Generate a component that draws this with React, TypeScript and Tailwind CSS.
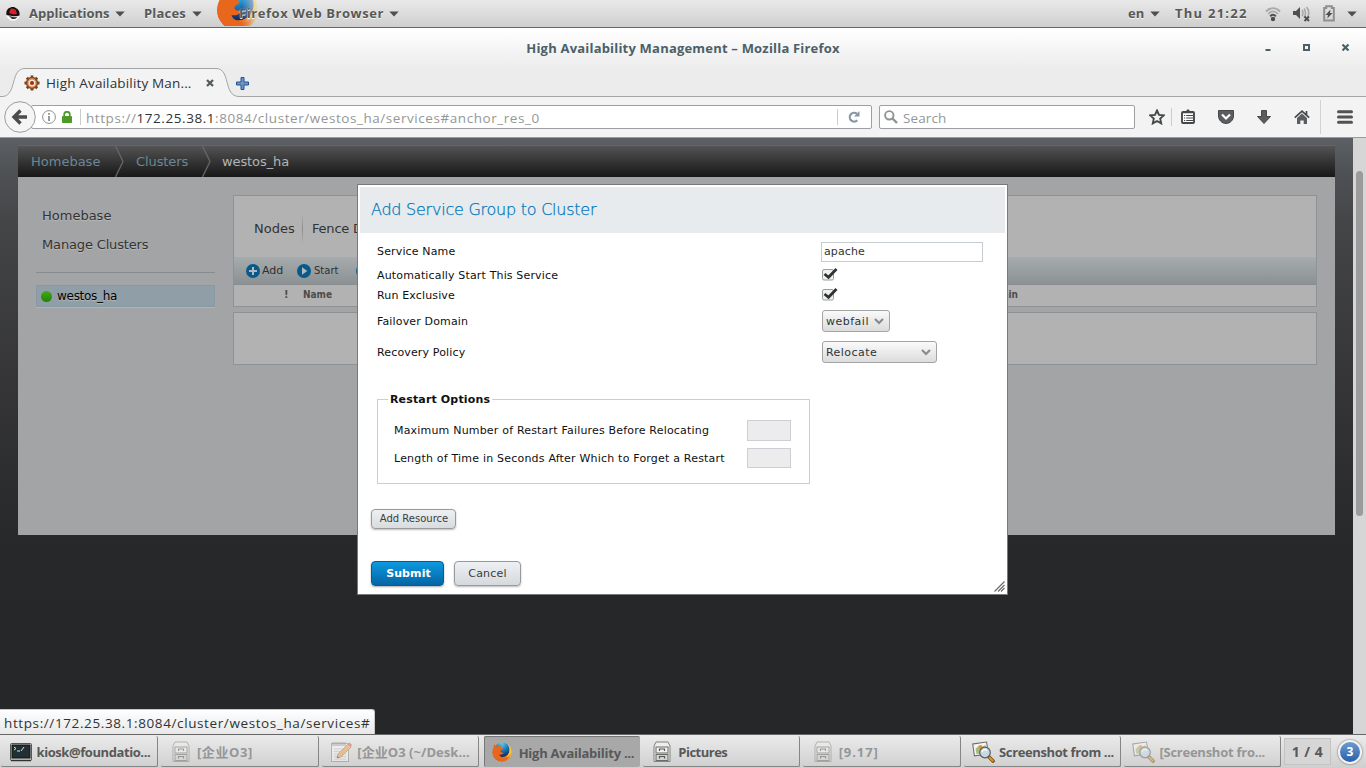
import type { ReactNode } from "react";

const CHROME = "font-['Open_Sans','Noto_Sans_CJK_SC',sans-serif]";
const PAGE = "font-['DejaVu_Sans',sans-serif]";

function Caret() {
  return (
    <svg width="10" height="6" viewBox="0 0 10 6" className="shrink-0">
      <path d="M0.3 0.5h9.4L5 5.4z" fill="#4d4f4f" />
    </svg>
  );
}

function FirefoxLogo({ size }: { size: number }) {
  return (
    <svg width={size} height={size} viewBox="0 0 40 40" className="block shrink-0">
      <defs>
        <radialGradient id="globe" cx="0.45" cy="0.1" r="0.9">
          <stop offset="0" stopColor="#5fd0f5" />
          <stop offset="0.45" stopColor="#1b86c9" />
          <stop offset="1" stopColor="#12245c" />
        </radialGradient>
        <linearGradient id="tail" x1="0" y1="0.8" x2="1" y2="0.2">
          <stop offset="0" stopColor="#d9481c" />
          <stop offset="0.55" stopColor="#ee7a1b" />
          <stop offset="1" stopColor="#fde24a" />
        </linearGradient>
      </defs>
      <circle cx="20" cy="20.500" r="19" fill="url(#tail)" />
      <circle cx="20.500" cy="15.500" r="14.500" fill="url(#globe)" />
      <path
        d="M5 4c-2 3-2 6-1.500 8C1 17 1 23 2.500 28c4 7 10 10 17 10 7-1 12-4 14-9-4 3-8 3.500-12 2-4-1-7-4-7-6 3 1 6 0 8-2 1-1 0-2-2-2-3 0-4-2-3-4l4-3c1-2-1-3-5-3 0-2 1-3 4-5-4-1-7 0-9 3L9 9C7 8 5.500 7 5 4z"
        fill="#e9671c"
      />
      <path d="M34 8c2 4 2 9 0 14-1 3-3 6-6 8 6-1 10-6 10.500-13C38.500 13 37 10 34 8z" fill="#f9c52d" />
    </svg>
  );
}

function TopPanel() {
  return (
    <header
      className={`${CHROME} relative flex h-7 items-center border-b border-[#666] bg-linear-to-b from-[#e9e9e9] to-[#cfcfcf] pt-px text-[13px] font-bold text-[#575959] [text-shadow:0_1px_0_#f4f4f4]`}
    >
      <svg width="14" height="14" viewBox="0 0 14 14" className="ml-1.5 shrink-0">
        <circle cx="7" cy="7" r="6.700" fill="#f8f8f8" />
        <path d="M0.500 8C-1 2 5-1 9 .5c4 1.500 5 5 4.500 8C10 10 5 9 .5 8z" fill="#151010" />
        <path d="M3 5.500L4.500 2C6 1 7 2 8 2c2 0 2.500 3 3 5-3 1-7 0-8-1.500z" fill="#d8202a" />
        <path d="M2 8c3 2 7 3 10 1.500L9 12H6z" fill="#333" />
      </svg>
      <span className="ml-[9px] w-[81px]">Applications</span>
      <span className="ml-[5px]"><Caret /></span>
      <span className="ml-[19px] w-[43px] tracking-[0.2px]">Places</span>
      <span className="ml-[5px]"><Caret /></span>
      <div className="absolute left-[216px] top-0 h-[26px] w-[43px] overflow-hidden">
        <div className="-mt-3 [mask-image:linear-gradient(to_right,black_60%,rgb(0_0_0/0.15)_98%)]">
          <FirefoxLogo size={43} />
        </div>
      </div>
      <span className="relative ml-[37px] w-[146px] whitespace-nowrap tracking-[0.56px] [text-shadow:0_0_1px_#eee,0_1px_0_#f4f4f4]">
        Firefox Web Browser
      </span>
      <span className="ml-1"><Caret /></span>
      <div className="ml-auto flex items-center">
        <span className="w-[17px]">en</span>
        <span className="ml-[5px]"><Caret /></span>
        <span className="ml-[15px] w-[76px] whitespace-nowrap tracking-[1.250px]">Thu 21:22</span>
        <svg width="16" height="16" viewBox="0 0 16 16" fill="none" className="ml-[14px]">
          <path d="M1 5.500C5 1 11 1 15 5.500M3.200 8c3-3.500 6.600-3.500 9.600 0" stroke="#a9abab" strokeWidth="1.900" />
          <path d="M5.200 10.300c1.800-2 3.800-2 5.600 0" stroke="#4d4f4f" strokeWidth="2" />
          <circle cx="8" cy="13" r="2.200" fill="#4d4f4f" />
        </svg>
        <svg width="18" height="16" viewBox="0 0 18 16" fill="none" className="ml-3">
          <path d="M0 5h3l4-4v12L3 9H0z" fill="#4d4f4f" />
          <path d="M9 4q2 3 0 6M11 2.500q3 4.500 0 9M13.500 1q4 5 1 10" stroke="#a5a7a7" strokeWidth="1.500" />
          <path d="M11.500 10.500l4.500 4.500m0-4.500L11.500 15" stroke="#4d4f4f" strokeWidth="1.900" />
        </svg>
        <svg width="12" height="17" viewBox="0 0 12 17" fill="none" className="mb-px ml-3">
          <path d="M1.200 3h2V1.200h5.600V3h2v12.500H1.200z" stroke="#8d8f8f" strokeWidth="2" />
          <path d="M7.500 4.500L2.500 10H5l-.7 3.500L9.500 8H7z" fill="#4d4f4f" />
        </svg>
        <span className="mr-[9px] ml-3"><Caret /></span>
      </div>
    </header>
  );
}

function TitleBar() {
  return (
    <div className={`${CHROME} flex h-[69px] flex-col bg-linear-to-b from-white to-[#ececec] to-60%`}>
      <div className="relative flex h-10 items-center justify-center pt-0.5 text-[13px] font-bold tracking-[0.2px] text-[#4b6068]">
        <span>High Availability Management – Mozilla Firefox</span>
        <svg width="90" height="14" viewBox="0 0 90 14" fill="none" className="absolute top-3 right-[14px]">
          <path d="M3.500 10H8.500" stroke="#4b6068" strokeWidth="2" />
          <rect x="42" y="5" width="5" height="5" stroke="#4b6068" strokeWidth="2" />
          <path d="M80.500 4.500l6 6m0-6l-6 6" stroke="#4b6068" strokeWidth="2.200" />
        </svg>
      </div>
      <div className="relative flex h-[29px] items-center text-[13.5px] text-[#2e3436]">
        <svg width="1366" height="29" viewBox="0 0 1366 29" fill="none" className="absolute inset-0">
          <path d="M0 29V28.500H3C17 27 10 .5 25 .5H216C231 .5 223 28.500 239 28.500H1366V29z" fill="#f3f3f3" />
          <path d="M0 28.500H3C17 27 10 .5 25 .5H216C231 .5 223 28.500 239 28.500H1366" stroke="#a2a6a9" />
        </svg>
        <svg width="16" height="16" viewBox="0 0 16 16" fill="none" className="relative ml-6">
          <path d="M8 0.500V15.500M.5 8H15.500M2.800 2.800l10.400 10.400M13.200 2.800L2.800 13.200" stroke="#744023" strokeWidth="2.800" />
          <circle cx="8" cy="8" r="5.400" fill="#d99b62" stroke="#8a4822" strokeWidth="1.500" />
          <circle cx="8" cy="8" r="2.700" fill="#a42b17" stroke="#f5e6d5" strokeWidth="1.300" />
        </svg>
        <span className="relative ml-[6px] w-[150px] pt-0.5 whitespace-nowrap tracking-[0.16px]">High Availability Man...</span>
        <svg width="8" height="8" viewBox="0 0 8 8" className="relative ml-[10px]">
          <path d="M1 1l6 6m0-6L1 7" stroke="#555b5d" strokeWidth="2.300" />
        </svg>
        <svg width="13" height="13" viewBox="0 0 13 13" className="relative mt-px ml-[22px]">
          <path d="M5 .5h3V5h4.500v3H8v4.500H5V8H.5V5H5z" fill="#6a95c8" stroke="#23538f" strokeLinejoin="round" />
        </svg>
      </div>
    </div>
  );
}

function Toolbar() {
  return (
    <div className={`${CHROME} relative flex h-[41px] items-center border-b border-[#9b9b9b] bg-[#f3f3f3] text-[13.5px]`}>
      <svg width="34" height="34" viewBox="0 0 34 34" fill="none" className="z-10 ml-[3px] shrink-0">
        <circle cx="17" cy="17" r="15.300" fill="#f5f5f5" stroke="#9a9d9e" />
        <path d="M24 17H12M17.500 10.500L11 17l6.500 6.500" stroke="#4a4c4d" strokeWidth="3.400" />
      </svg>
      <div className="-ml-1.5 flex h-6 w-[841px] items-center rounded-[2px] border border-[#9d9fa0] bg-white">
        <svg width="14" height="14" viewBox="0 0 14 14" fill="none" className="ml-2.5 shrink-0">
          <circle cx="7" cy="7" r="6.400" stroke="#8d9091" />
          <path d="M7 3v1.800M7 6v5" stroke="#8d9091" strokeWidth="1.800" />
        </svg>
        <svg width="10" height="12" viewBox="0 0 10 12" fill="none" className="ml-1.5 shrink-0">
          <path d="M2.200 6V3.500a2.800 2.700 0 0 1 5.600 0V6" stroke="#4d9a28" strokeWidth="1.700" />
          <rect y="5" width="10" height="7" rx="0.800" fill="#4d9a28" />
        </svg>
        <span className="ml-2 h-4 border-l border-[#ccc]" />
        <span className="ml-[5px] pt-0.5 whitespace-nowrap tracking-[0.56px] text-[#949797]">
          https://<span className="text-[#2e3436]">172.25.38.1</span>:8084/cluster/westos_ha/services#anchor_res_0
        </span>
        <span className="ml-auto h-4 border-l border-[#ccc]" />
        <svg width="12" height="12" viewBox="0 0 12 12" fill="none" className="mr-[11px] ml-2.5">
          <path d="M9.300 9.300A4.400 4.400 0 1 1 9 2.800" stroke="#8997a3" strokeWidth="2.200" />
          <path d="M11.500 0v5.500H6z" fill="#8997a3" />
        </svg>
      </div>
      <div className="ml-[7px] flex h-6 w-64 items-center rounded-[2px] border border-[#9d9fa0] bg-white">
        <svg width="14" height="14" viewBox="0 0 14 14" fill="none" className="ml-1">
          <circle cx="5.300" cy="5.300" r="4.200" stroke="#8f9292" strokeWidth="1.900" />
          <path d="M8.500 8.500l4.500 4.500" stroke="#8f9292" strokeWidth="2.400" />
        </svg>
        <span className="ml-[5px] pt-0.5 tracking-[0.1px] text-[#949797]">Search</span>
      </div>
      <svg width="16" height="16" viewBox="0 0 16 16" fill="none" className="ml-3.5">
        <path d="M8 1.500l2 4.400 4.800.5-3.600 3.200 1 4.800L8 12l-4.200 2.400 1-4.800L1.200 6.400 6 5.900z" stroke="#454749" strokeWidth="1.900" />
      </svg>
      <span className="ml-1.5 h-[18px] border-l border-[#ccc]" />
      <svg width="14" height="15" viewBox="0 0 14 15" fill="none" className="mb-0.5 ml-[9px]">
        <rect x="1" y="3" width="12" height="11" rx="1" fill="#fff" stroke="#454749" strokeWidth="1.900" />
        <path d="M4 3L7 0l3 3z" fill="#454749" />
        <path d="M2 3.500h10" stroke="#454749" strokeWidth="1.500" />
        <path d="M3 6.500h1.200m1 0H12M3 9h1.200m1 0H12M3 11.500h1.200m1 0H12" stroke="#454749" />
      </svg>
      <svg width="16" height="14" viewBox="0 0 16 14" fill="none" className="ml-[23px]">
        <path d="M.5.500h15V6c0 4-3.500 7.500-7.500 7.500S.5 10 .5 6z" fill="#5b5d5f" stroke="#454749" />
        <path d="M4 4.500l4 4 4-4" stroke="white" strokeWidth="2.200" />
      </svg>
      <svg width="14" height="14" viewBox="0 0 14 14" className="ml-[23px]">
        <path d="M4.500.5h5v6h4L7 13.500.5 6.500h4z" fill="#5b5d5f" stroke="#454749" />
      </svg>
      <svg width="16" height="14" viewBox="0 0 16 14" fill="none" className="ml-[23px]">
        <path d="M3 8l5-4.500L13 8v6H9.700v-3.500H6.300V14H3z" fill="#5b5d5f" />
        <path d="M.8 7.700L8 1.200l7.200 6.500M12.500 1v4" stroke="#454749" strokeWidth="1.700" />
      </svg>
      <span className="ml-2.5 h-[34px] border-l border-[#d2d2d2]" />
      <svg width="16" height="14" viewBox="0 0 16 14" className="ml-4">
        <path d="M1.500 1.700h13M1.500 7h13M1.500 12.300h13" stroke="#505254" strokeWidth="3" strokeLinecap="round" />
      </svg>
    </div>
  );
}

function CrumbArrow() {
  return (
    <svg width="10" height="31" viewBox="0 0 10 31" fill="none" className="shrink-0">
      <path d="M.5 0L8 15.500.5 31" stroke="#666" strokeWidth="1.300" />
    </svg>
  );
}

function ActionIcon({ play }: { play?: boolean }) {
  return (
    <svg width="14" height="14" viewBox="0 0 14 14" className="shrink-0">
      <circle cx="7" cy="7" r="7" fill="#085a8d" />
      {play ? <path d="M5 3.300L10.300 7 5 10.700z" fill="#b5b9bb" /> : <path d="M7 3v8M3 7h8" stroke="#b5b9bb" strokeWidth="2" />}
    </svg>
  );
}

function ClusterPage() {
  return (
    <div className="mx-[18px] mt-[7px] flex h-[390px] flex-col">
      <nav className="flex h-8 items-center border-t border-[#636567] bg-linear-to-b from-[#545454] to-[#181818] text-[13px] text-[#6b8797]">
        <span className="ml-[13px] w-[84px]">Homebase</span>
        <CrumbArrow />
        <span className="ml-[11px] w-[66px] tracking-[-0.1px]">Clusters</span>
        <CrumbArrow />
        <span className="ml-[10px] tracking-[-0.1px] text-[#b4b4b4]">westos_ha</span>
      </nav>
      <div className="flex flex-1 bg-[#a3a4a6]">
        <aside className="ml-[18px] w-[179px] pt-[29px] text-[13px] text-[#333] [text-shadow:0_1px_1px_#bbb]">
          <div className="ml-1.5 leading-[19px]">Homebase</div>
          <div className="mt-2.5 ml-1.5 leading-[19px] tracking-[-0.15px]">Manage Clusters</div>
          <div className="mt-[18px] border-t border-[#878b8e]" />
          <div className="mt-3 flex h-[22px] items-center rounded-[1px] border border-[#8799a3] bg-[#909ea7] text-xs tracking-[-0.28px] text-black shadow-[0_1px_1px_#b5b5b5]">
            <span className="mr-[5px] ml-1 size-[11px] rounded-full bg-linear-to-b from-[#45a818] to-[#1b8600]" />
            westos_ha
          </div>
        </aside>
        <main className="mt-[18px] mr-[18px] ml-[18px] flex-1">
          <section className="flex h-28 flex-col border border-[#8e9294] bg-[#b2b2b2]">
            <div className="flex h-[61px] items-center pt-1 pl-5 text-[13px] text-[#333]">
              <span className="w-12">Nodes</span>
              <span className="h-[30px] w-px bg-linear-to-b from-transparent via-[#8c8c8c] to-transparent" />
              <span className="ml-[9px] whitespace-nowrap tracking-[-0.2px]">Fence Devices</span>
            </div>
            <div className="flex h-7 items-center border-b border-[#8b8e90] bg-linear-to-b from-[#a6abae] to-[#8c9193] pl-3 text-[11px] text-[#2f2f2f]">
              <ActionIcon />
              <span className="ml-[2px] w-[35px] pt-px">Add</span>
              <ActionIcon play />
              <span className="ml-[3px] w-[42px] text-[10px]">Start</span>
              <ActionIcon />
            </div>
            <div className="flex flex-1 items-center pb-0.5 text-[10px] font-bold text-[#4c4c4c]">
              <span className="ml-[50px] w-[19px]">!</span>
              <span className="w-[656px] font-['DejaVu_Sans_Condensed','DejaVu_Sans',sans-serif]">Name</span>
              <span className="w-[60px] pr-px text-right font-['DejaVu_Sans_Condensed','DejaVu_Sans',sans-serif]">Domain</span>
            </div>
          </section>
          <section className="mt-[5px] h-[53px] border border-[#8e9294] bg-[#b2b2b2]" />
        </main>
      </div>
    </div>
  );
}

function FormRow({ label, className, children }: { label: string; className: string; children: ReactNode }) {
  return (
    <div className={`flex items-center ${className}`}>
      <span className="w-[444px] tracking-[0.15px]">{label}</span>
      {children}
    </div>
  );
}

function Checkbox() {
  return (
    <svg width="16" height="14" viewBox="0 0 16 14" fill="none" className="mb-0.5 ml-px">
      <rect x=".5" y="2.500" width="11" height="10.500" rx="1.500" fill="#f0f0f0" stroke="#9b9d9d" />
      <path d="M2.500 7l4 3.300L14.500 2" stroke="#2e3436" strokeWidth="2.800" />
    </svg>
  );
}

function Select({ value, className }: { value: string; className: string }) {
  return (
    <button
      className={`ml-px flex h-[22px] items-center justify-between rounded-[3px] border border-[#a3a5a5] bg-linear-to-b from-[#fafafa] to-[#dcdcdc] pl-[3px] text-[#2e3436] ${className}`}
    >
      <span className="pt-[3px]">{value}</span>
      <svg width="10" height="7" viewBox="0 0 10 7" fill="none" className="mr-[5px]">
        <path d="M1 1l4 4 4-4" stroke="#8a8c8c" strokeWidth="2.200" />
      </svg>
    </button>
  );
}

function ServiceDialog() {
  return (
    <div className="absolute top-[46px] left-[357px] flex h-[411px] w-[651px] flex-col border border-[#77797b] bg-white text-[11px] text-[#101010]">
      <h2 className="mx-0.5 mt-0.5 flex h-[46px] items-center bg-[#e7ebee] pl-[11px] font-['DejaVu_Sans_Light','DejaVu_Sans',sans-serif] text-base font-extralight tracking-[-0.24px] text-[#0076bb] [-webkit-text-stroke:0.25px_#0076bb]">
        Add Service Group to Cluster
      </h2>
      <div className="mt-2 ml-[19px]">
        <FormRow label="Service Name" className="h-[22px]">
          <input
            defaultValue="apache"
            className="h-5 w-[162px] border border-[#c6ccd2] px-[2px] pb-0.5 font-['DejaVu_Sans',sans-serif] text-[11px] tracking-[0.1px] text-[#2e3436]"
          />
        </FormRow>
        <FormRow label="Automatically Start This Service" className="mt-0.5 h-5 [&>span]:pt-0.5">
          <Checkbox />
        </FormRow>
        <FormRow label="Run Exclusive" className="h-5 [&>span]:pt-0.5">
          <Checkbox />
        </FormRow>
        <FormRow label="Failover Domain" className="h-8 [&>span]:pt-0.5">
          <Select value="webfail" className="w-[68px] tracking-[0.5px]" />
        </FormRow>
        <FormRow label="Recovery Policy" className="h-[30px] [&>span]:pt-0.5">
          <Select value="Relocate" className="w-[115px] tracking-[0.45px]" />
        </FormRow>
      </div>
      <fieldset className="mt-[25px] ml-[19px] h-[92px] w-[433px] border border-[#c8ced3] pt-[13px] pl-4">
        <legend className="-ml-1.5 px-0.5 leading-[15px] font-bold tracking-[0.15px]">Restart Options</legend>
        <div className="flex h-[21px] items-center">
          <span className="w-[353px] pt-0.5 tracking-[0.19px]">Maximum Number of Restart Failures Before Relocating</span>
          <input disabled className="h-[21px] w-11 border border-[#ccd0d4] bg-[#ececec]" />
        </div>
        <div className="mt-[7px] flex h-5 items-center">
          <span className="w-[353px] pt-[3px] tracking-[0.2px]">Length of Time in Seconds After Which to Forget a Restart</span>
          <input disabled className="h-5 w-11 border border-[#ccd0d4] bg-[#ececec]" />
        </div>
      </fieldset>
      <button className="mt-[25px] ml-[13px] h-5 w-[85px] rounded-[4px] border border-[#97999b] bg-linear-to-b from-[#eef1f4] to-[#d9dcdf] pl-px text-[10px] leading-none text-[#3c3c3c] shadow-[0_1px_2px_#bbb]">
        Add Resource
      </button>
      <div className="mt-8 ml-[13px] flex gap-2.5 text-[11px]">
        <button className="h-[25px] w-[73px] rounded-[4px] border border-[#075a92] bg-linear-to-b from-[#0f99df] to-[#0465a5] pt-0.5 pl-0.5 font-bold tracking-[0.1px] text-white shadow-[0_1px_2px_#aaa]">
          Submit
        </button>
        <button className="h-[25px] w-[67px] rounded-[4px] border border-[#97999b] bg-linear-to-b from-[#eef1f4] to-[#d5d8dc] pt-0.5 tracking-[0.2px] text-[#3c3c3c] shadow-[0_1px_2px_#bbb]">
          Cancel
        </button>
      </div>
      <svg width="11" height="11" viewBox="0 0 11 11" className="absolute right-0.5 bottom-[2.500px]">
        <path d="M.5 10.500l10-10M4 10.500L10.500 4M7 10.500L10.500 7" stroke="#666" strokeWidth="1.100" />
      </svg>
    </div>
  );
}

function TerminalIcon() {
  return (
    <svg width="22" height="20" viewBox="0 0 22 20" fill="none">
      <rect x=".5" y="1.500" width="21" height="17" rx="1" fill="#d6d6d1" stroke="#555753" />
      <rect x="2" y="3" width="18" height="13" fill="#203034" stroke="#111" />
      <path d="M4 5l2 1.500L4 8M7 9h3M11 9l3-4" stroke="#dde5e0" />
      <path d="M1 18.500h20" stroke="#333" strokeWidth="1.500" />
    </svg>
  );
}

function CabinetIcon() {
  return (
    <svg width="20" height="22" viewBox="0 0 20 22" fill="none" className="ml-px">
      <path d="M4 1h12l2 4v15.500H2V5z" fill="#eeeeec" stroke="#80837f" />
      <rect x="4" y="6" width="12" height="6" fill="#f4f4f2" stroke="#686b67" />
      <rect x="4" y="13.500" width="12" height="6" fill="#d5d7d2" stroke="#686b67" />
      <path d="M7.500 10V8h5v2M7.500 17.500v-2h5v2" stroke="#555753" strokeWidth="1.200" />
    </svg>
  );
}

function EditorIcon() {
  return (
    <svg width="22" height="22" viewBox="0 0 22 22" fill="none">
      <rect x="1.500" y="2.500" width="17" height="18" fill="#f6f6f4" stroke="#888a85" />
      <path d="M3 1v4m2-4v4m2-4v4m2-4v4m2-4v4m2-4v4m2-4v4" stroke="#666" strokeWidth=".9" />
      <path d="M4 8h12M4 10.500h12M4 13h12M4 15.500h12M4 18h12" stroke="#c4c4c4" />
      <path d="M7 17l1-4 10-10 3 3-10 10z" fill="#eda348" stroke="#99642a" strokeWidth=".7" />
      <path d="M18 3l1.500-1.500 2.500 2.500L21 6z" fill="#e54f4f" />
      <path d="M7 17l.5-2 1.500 1.500z" fill="#222" />
    </svg>
  );
}

function ViewerIcon() {
  return (
    <svg width="23" height="22" viewBox="0 0 23 22" fill="none">
      <rect x="1.500" y="2" width="14" height="12" transform="rotate(-8 8 8)" fill="#f4f4f0" stroke="#666963" />
      <path d="M3.500 8l3-3 3 1 4-2v8l-9 1z" fill="#a9bb80" />
      <circle cx="8.500" cy="6" r="2" fill="#e98e2c" />
      <path d="M17 16l4 4" stroke="#6e4713" strokeWidth="3.600" strokeLinecap="round" />
      <path d="M17.500 16.500l3.200 3.200" stroke="#e59620" strokeWidth="2" strokeLinecap="round" />
      <circle cx="13" cy="11.500" r="5.300" fill="#c9dbe7" fillOpacity=".9" stroke="#5a5e60" strokeWidth="1.200" />
      <path d="M10 11c1-3 4-3 5-1" stroke="white" strokeWidth="1.500" />
    </svg>
  );
}

type Task = { title: string; icon: ReactNode; className: string; state?: "minimized" | "active" };

const TASKS: Task[] = [
  { title: "kiosk@foundatio...", icon: <TerminalIcon />, className: "tracking-[-0.42px]" },
  { title: "[企业O3]", icon: <CabinetIcon />, className: "tracking-[0.6px]", state: "minimized" },
  { title: "[企业O3 (~/Desk...", icon: <EditorIcon />, className: "tracking-[0.05px]", state: "minimized" },
  { title: "High Availability ...", icon: <FirefoxLogo size={20} />, className: "tracking-[-0.25px]", state: "active" },
  { title: "Pictures", icon: <CabinetIcon />, className: "tracking-[-0.5px]" },
  { title: "[9.17]", icon: <CabinetIcon />, className: "tracking-[0.9px]", state: "minimized" },
  { title: "Screenshot from ...", icon: <ViewerIcon />, className: "tracking-[-0.38px]" },
  { title: "[Screenshot fro...", icon: <ViewerIcon />, className: "tracking-[-0.25px]", state: "minimized" },
];

function TaskBar() {
  return (
    <footer
      className={`${CHROME} flex h-[34px] border-t border-[#666] bg-linear-to-b from-[#ebebeb] to-[#cfcfcf] pt-px text-[13px] font-bold text-[#575959]`}
    >
      <div className="flex gap-[3px] pl-px">
        {TASKS.map((task) => (
          <div
            key={task.title}
            className={`flex h-[31px] items-center rounded-[2px] whitespace-nowrap ${
              task.state === "active"
                ? "ml-0.5 w-[155.600px] border-t border-l border-[#777] bg-[#a8a8a8] pl-[6.500px]"
                : "w-[157.400px] border-r border-b border-[#858585] pt-px pl-[8.500px]"
            }`}
          >
            <span className={`flex w-[27px] shrink-0 ${task.state === "minimized" ? "opacity-50" : ""}`}>{task.icon}</span>
            <span className={`pt-[3px] ${task.className} ${task.state === "minimized" ? "text-[#959696]" : ""}`}>
              {task.title}
            </span>
          </div>
        ))}
      </div>
      <div className="mt-0.5 ml-auto flex h-[27px] w-[47px] items-center justify-center border border-[#c3c3c3] bg-[#d6d6d6] text-sm tracking-[0.5px]">
        1 / 4
      </div>
      <div className="mt-1 mr-1 ml-[7px] flex size-6 items-center justify-center rounded-full border-2 border-[#f2f2f2] bg-linear-to-b from-[#6b9bd2] to-[#2860a8] text-xs text-white shadow-[0_0_2px_#444]">
        3
      </div>
    </footer>
  );
}

export default function App() {
  return (
    <div className="flex h-[768px] w-[1366px] flex-col overflow-hidden">
      <TopPanel />
      <TitleBar />
      <Toolbar />
      <div className={`${PAGE} relative flex h-[596px]`}>
        <div className="w-[1353px] bg-[linear-gradient(#5c6064,#4e5154_36px,#444547_85px,#363638_235px,#28292b_395px,#262729_470px)]">
          <ClusterPage />
        </div>
        <div className="w-[13px] bg-[#d6d6d6] pt-[33px] pl-[3px]">
          <div className="h-[345px] w-[7px] rounded-full bg-[#9b9b9b]" />
        </div>
        <ServiceDialog />
        <div
          className={`${CHROME} absolute bottom-0 left-0 flex h-[25px] w-[375px] items-center rounded-tr-[3px] border-t border-r border-[#c8c8c8] bg-linear-to-b from-white to-[#e8e8e8] pt-0.5 pl-1 text-[13.5px] tracking-[0.61px] whitespace-nowrap text-[#2e3436]`}
        >
          https://172.25.38.1:8084/cluster/westos_ha/services#
        </div>
      </div>
      <TaskBar />
    </div>
  );
}
